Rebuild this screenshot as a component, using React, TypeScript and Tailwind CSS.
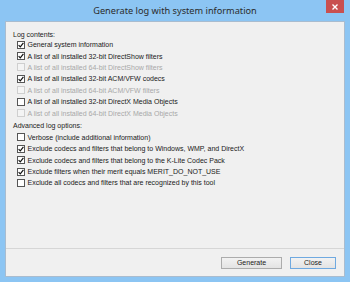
import React from "react";

type Item = { label: string; checked: boolean; disabled?: boolean };

const logItems: Item[] = [
  { label: "General system information", checked: true },
  { label: "A list of all installed 32-bit DirectShow filters", checked: true },
  { label: "A list of all installed 64-bit DirectShow filters", checked: false, disabled: true },
  { label: "A list of all installed 32-bit ACM/VFW codecs", checked: true },
  { label: "A list of all installed 64-bit ACM/VFW filters", checked: false, disabled: true },
  { label: "A list of all installed 32-bit DirectX Media Objects", checked: false },
  { label: "A list of all installed 64-bit DirectX Media Objects", checked: false, disabled: true },
];

const advItems: Item[] = [
  { label: "Verbose (include additional information)", checked: false },
  { label: "Exclude codecs and filters that belong to Windows, WMP, and DirectX", checked: true },
  { label: "Exclude codecs and filters that belong to the K-Lite Codec Pack", checked: true },
  { label: "Exclude filters when their merit equals MERIT_DO_NOT_USE", checked: true },
  { label: "Exclude all codecs and filters that are recognized by this tool", checked: false },
];

function Row({ item }: { item: Item }) {
  return (
    <div className="flex h-[11.4px] items-center pl-[11px]">
      <div
        className={
          "flex h-[8px] w-[8px] items-center justify-center border " +
          (item.disabled ? "border-[#cfcfcf] bg-[#f4f4f4]" : "border-[#555] bg-white")
        }
      >
        {item.checked && (
          <svg width="6" height="6" viewBox="0 0 6 6">
            <path d="M0.6 3.1 L2.3 4.8 L5.4 0.9" stroke="#111" strokeWidth="1.2" fill="none" />
          </svg>
        )}
      </div>
      <span
        className={
          "ml-[2.5px] whitespace-nowrap text-[7px] leading-none " +
          (item.disabled ? "text-[#a8a8a8]" : "text-[#1a1a1a]")
        }
      >
        {item.label}
      </span>
    </div>
  );
}

export default function App() {
  return (
    <div
      className="flex h-[282px] w-[350px] flex-col bg-[#8cc5f3]"
      style={{ fontFamily: "'Liberation Sans', Arial, sans-serif" }}
    >
      <div className="relative flex h-[21px] items-center justify-center">
        <span
          className="text-[9.2px] text-[#2b2b2b]"
          style={{ fontFamily: "'Noto Sans', 'Open Sans', sans-serif" }}
        >
          Generate log with system information
        </span>
        <div className="absolute right-[6px] top-0 flex h-[13px] w-[18px] items-center justify-center bg-[#c9504f]">
          <svg width="6" height="6" viewBox="0 0 6 6">
            <path d="M0.5 0.5 L5.5 5.5 M5.5 0.5 L0.5 5.5" stroke="#fff" strokeWidth="1.4" />
          </svg>
        </div>
      </div>
      <div className="mx-[5px] mb-[5px] flex flex-1 flex-col border border-[#a9bccf] bg-[#f0f0f0]">
        <div className="flex flex-1 flex-col pt-[7px]">
          <div className="flex h-[10px] items-center pl-[7px] text-[7px] leading-none text-[#1a1a1a]">
            Log contents:
          </div>
          {logItems.map((it, i) => (
            <Row key={i} item={it} />
          ))}
          <div className="flex h-[13px] items-center pl-[7px] text-[7px] leading-none text-[#1a1a1a]">
            Advanced log options:
          </div>
          {advItems.map((it, i) => (
            <Row key={i} item={it} />
          ))}
        </div>
        <div className="h-[1px] bg-[#d6d6d6]" />
        <div className="flex h-[27px] items-center justify-end gap-[8px] pr-[8px]">
          <div className="flex h-[12px] w-[61px] items-center justify-center border border-[#acacac] bg-gradient-to-b from-[#f2f2f2] to-[#e3e3e3] text-[7px] leading-none text-[#1a1a1a]">
            Generate
          </div>
          <div className="flex h-[12px] w-[46px] items-center justify-center border border-[#6fa9e0] bg-gradient-to-b from-[#f2f2f2] to-[#e3e3e3] text-[7px] leading-none text-[#1a1a1a]">
            Close
          </div>
        </div>
      </div>
    </div>
  );
}
